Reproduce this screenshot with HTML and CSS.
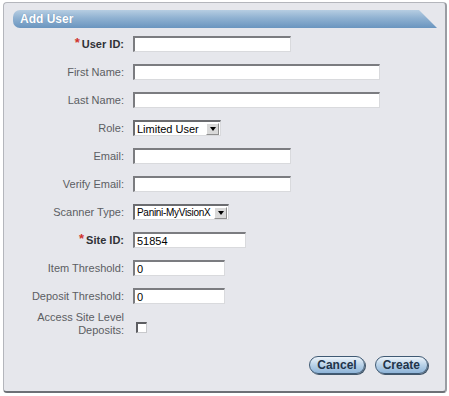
FILE: index.html
```html
<!DOCTYPE html>
<html lang="en">

<head>
    <meta charset="UTF-8">
    <title>Add User</title>
    <link rel="stylesheet" href="styles.css">
</head>

<body>
    <div class="panel">
        <div class="titulo">Add User</div>

        <form class="formulario">
            <label class="req"><span class="ast">*</span>User ID:</label>
            <div class="campo"><input class="caja media"></div>

            <label>First Name:</label>
            <div class="campo"><input class="caja larga"></div>

            <label>Last Name:</label>
            <div class="campo"><input class="caja larga"></div>

            <label>Role:</label>
            <div class="campo">
                <div class="lista rol"><span>Limited User</span><i class="flecha"></i></div>
            </div>

            <label>Email:</label>
            <div class="campo"><input class="caja media"></div>

            <label>Verify Email:</label>
            <div class="campo"><input class="caja media"></div>

            <label>Scanner Type:</label>
            <div class="campo">
                <div class="lista escaner"><span>Panini-MyVisionX</span><i class="flecha"></i></div>
            </div>

            <label class="req"><span class="ast">*</span>Site ID:</label>
            <div class="campo"><input class="caja sitio" value="51854"></div>

            <label>Item Threshold:</label>
            <div class="campo"><input class="caja corta" value="0"></div>

            <label>Deposit Threshold:</label>
            <div class="campo"><input class="caja corta" value="0"></div>

            <label class="doble">Access Site Level<br>Deposits:</label>
            <div class="campo"><span class="check"></span></div>
        </form>

        <div class="botones">
            <button type="button">Cancel</button>
            <button type="button">Create</button>
        </div>
    </div>
</body>

</html>
```

FILE: styles.css
```css
body {
    margin: 0;
    background-color: #ffffff;
    font-family: "Liberation Sans", Arial, sans-serif;
}

.panel {
    margin: 2px 0 0 3px;
    width: 441px;
    height: 388px;
    background-color: #e6e7ec;
    border: 1px solid #b4b6bc;
    border-bottom: 2px solid #6d7076;
    border-right: 2px solid #9a9da3;
    border-radius: 4px;
    box-sizing: content-box;
}

.titulo {
    margin: 7px 8px 0 9px;
    height: 18px;
    line-height: 18px;
    padding-left: 7px;
    color: #ffffff;
    font-size: 12px;
    font-weight: bold;
    background: linear-gradient(#b6cde2, #8fb1d1 45%, #6a95bf);
    border-radius: 7px 0 0 7px;
    clip-path: polygon(0 0, calc(100% - 18px) 0, 100% 100%, 0 100%);
    text-shadow: 0 0 1px #5f86ad;
}

.formulario {
    display: grid;
    grid-template-columns: 120px auto;
    column-gap: 9px;
    row-gap: 12px;
    margin-top: 8px;
    font-size: 11px;
}

.formulario label {
    text-align: right;
    color: #5c5e63;
    display: flex;
    align-items: center;
    justify-content: flex-end;
    height: 16px;
}

.formulario label.req {
    color: #2f3136;
    font-weight: bold;
}

.ast {
    color: #d0342c;
    font-size: 13px;
    margin-right: 2px;
    position: relative;
    top: -2px;
}

.formulario label.doble {
    height: auto;
    line-height: 13px;
    margin-top: -5px;
}

.campo {
    display: flex;
    align-items: center;
    height: 16px;
}

.caja {
    height: 16px;
    box-sizing: border-box;
    margin: 0;
    padding: 0 2px;
    font-family: "Liberation Sans", Arial, sans-serif;
    font-size: 11px;
    color: #000000;
    background-color: #ffffff;
    border-top: 2px solid #7b7c80;
    border-left: 2px solid #7b7c80;
    border-right: 1px solid #d9dadd;
    border-bottom: 1px solid #d9dadd;
    outline: none;
}

.media {
    width: 158px;
}

.larga {
    width: 247px;
}

.sitio {
    width: 113px;
}

.corta {
    width: 92px;
}

.lista {
    height: 16px;
    box-sizing: border-box;
    display: flex;
    align-items: center;
    justify-content: space-between;
    background-color: #ffffff;
    border-top: 2px solid #6b6c70;
    border-left: 2px solid #6b6c70;
    border-right: 1px solid #d9dadd;
    border-bottom: 1px solid #d9dadd;
    padding-left: 2px;
    font-size: 11px;
    color: #000000;
    white-space: nowrap;
    overflow: hidden;
}

.rol {
    width: 88px;
}

.escaner {
    width: 96px;
    font-size: 10px;
    letter-spacing: -0.3px;
}

.flecha {
    width: 13px;
    height: 12px;
    flex-shrink: 0;
    margin-right: 1px;
    box-sizing: border-box;
    background-color: #d9d9d9;
    border: 1px solid #8f8f8f;
    border-top-color: #ffffff;
    border-left-color: #ffffff;
    position: relative;
}

.flecha::after {
    content: "";
    position: absolute;
    left: 3px;
    top: 3px;
    border-left: 3px solid transparent;
    border-right: 3px solid transparent;
    border-top: 4px solid #000000;
}

.check {
    display: block;
    width: 11px;
    height: 11px;
    box-sizing: border-box;
    margin-left: 3px;
    margin-top: 6px;
    background-color: #ffffff;
    border-top: 2px solid #5d5e62;
    border-left: 2px solid #5d5e62;
    border-right: 1px solid #c8c9cc;
    border-bottom: 1px solid #c8c9cc;
}

.botones {
    display: flex;
    justify-content: flex-end;
    gap: 10px;
    padding-right: 17px;
    margin-top: 19px;
}

.botones button {
    height: 18px;
    padding: 0 7px;
    font-family: "Liberation Sans", Arial, sans-serif;
    font-size: 12px;
    font-weight: bold;
    color: #22344a;
    border: 1px solid #3f5a74;
    border-radius: 10px;
    background: linear-gradient(#eef4fa, #b9d2e8 50%, #8eb4d8);
    box-shadow: 1px 1px 0 #42576b;
}
```
